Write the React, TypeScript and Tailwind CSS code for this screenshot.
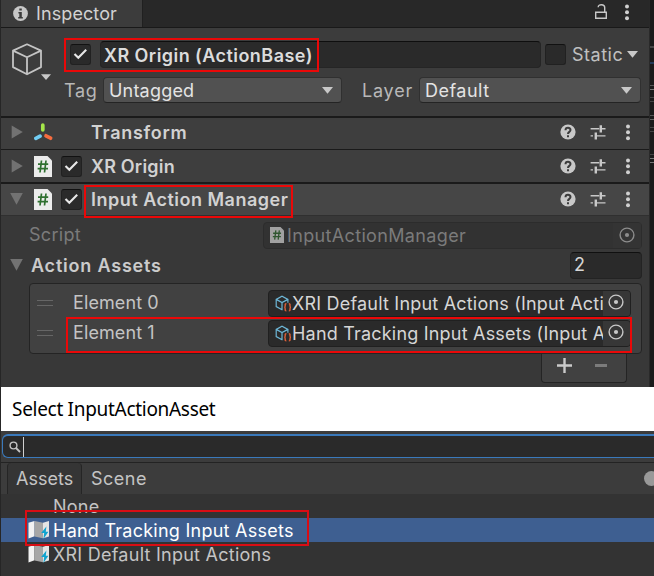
import type { ReactNode } from "react";

function Check({ on = true }: { on?: boolean }) {
  return (
    <span className="flex h-[21px] w-[21px] shrink-0 items-center justify-center rounded-[3px] border border-[#212121] border-t-[#111] bg-[#2a2a2a]">
      {on && (
        <svg width="15" height="13" viewBox="0 0 15 13" fill="none" stroke="#e8e8e8" strokeWidth="2.1">
          <path d="M1.5 6 5.3 9.8 13.2 1.8" />
        </svg>
      )}
    </span>
  );
}

function Caret() {
  return (
    <svg width="11" height="7" viewBox="0 0 11 7" className="shrink-0" fill="#c8c8c8">
      <path d="M0 0h11L5.5 6.8z" />
    </svg>
  );
}

function Foldout({ open = false }: { open?: boolean }) {
  return (
    <svg width="13" height="14" viewBox="0 0 13 14" className="shrink-0" fill="#727272">
      {open ? <path d="M.2 1h12.6L6.5 12.8z" /> : <path d="M1.7 .5 12.8 7 1.7 13.5z" />}
    </svg>
  );
}

function Kebab() {
  return (
    <svg width="4" height="17" viewBox="0 0 4 17" className="shrink-0" fill="#d0d0d0">
      <circle cx="2" cy="2.4" r="2" />
      <circle cx="2" cy="8.3" r="2" />
      <circle cx="2" cy="14.2" r="2" />
    </svg>
  );
}

function ScriptIcon({ small = false }: { small?: boolean }) {
  return (
    <svg width={small ? 14 : 18} height={small ? 16 : 21} viewBox="0 0 18 21" className="shrink-0" preserveAspectRatio="none">
      <path d="M0 0h13.5L18 4.5V21H0z" fill="#ececec" />
      <path d="M7.5 4.5 6 16.5M12 4.5 10.5 16.5M4 8.2h10.2M3.6 12.6H14" stroke="#2f7030" strokeWidth="1.7" fill="none" />
    </svg>
  );
}

function TransformIcon() {
  return (
    <svg width="20" height="18" viewBox="0 0 20 18" className="shrink-0" strokeLinecap="round" strokeWidth="3.7">
      <path d="M8.8 2v4.8" stroke="#a5e64a" />
      <path d="M6 13.2 1.9 15.3" stroke="#71cdf4" />
      <path d="m12 12.8 4.6 2.4" stroke="#f66c3f" />
    </svg>
  );
}

function Tools() {
  return (
    <div className="ml-auto flex items-center pr-[19px]">
      <svg width="16" height="16" viewBox="0 0 16 16">
        <circle cx="8" cy="8" r="7.6" fill="#c8c8c8" />
        <path d="M5.5 6.2C5.5 3 10.5 3 10.5 6.1 10.5 8 8 7.8 8 10" fill="none" stroke="#3c3c3c" strokeWidth="2" />
        <path d="M7 11.3h2v1.9H7z" fill="#3c3c3c" />
      </svg>
      <svg width="16" height="16" viewBox="0 0 16 16" className="ml-[14px]" fill="#c8c8c8">
        <path d="M.6 4h8.6v1.4H.6zM12 4h3.5v1.4H12zM9.6 1.2H12v7.2H9.6zM.6 11.2h2.4v1.4H.6zM7 11.2h8.5v1.4H7zM4.6 8.4H7v7.2H4.6z" />
      </svg>
      <span className="ml-[20px] flex">
        <Kebab />
      </span>
    </div>
  );
}

function AssetCube() {
  return (
    <svg width="17" height="17" viewBox="0 0 17 17" className="shrink-0" fill="none">
      <path d="M7.5 15 1.2 11.6V4.4L7 1.3l5.9 3.1v3.4M1.2 4.4 7 7.6l5.9-3.2M7 7.6V15" stroke="#6db6d6" strokeWidth="1.2" />
      <path d="M11.4 8.7c-1.4 0-1.2.8-1.2 2 0 1.3-.2 1.6-1 1.6.8 0 1 .3 1 1.6 0 1.2-.2 2 1.2 2M13.8 8.7c1.4 0 1.2.8 1.2 2 0 1.3.2 1.6 1 1.6-.8 0-1 .3-1 1.6 0 1.2.2 2-1.2 2" stroke="#e2613a" strokeWidth="1.4" />
    </svg>
  );
}

function Picker() {
  return (
    <svg width="16" height="16" viewBox="0 0 16 16">
      <circle cx="8" cy="8" r="6.9" fill="none" stroke="#c8c8c8" strokeWidth="1.4" />
      <circle cx="8" cy="8" r="2.1" fill="#c8c8c8" />
    </svg>
  );
}

function MapIcon() {
  return (
    <svg width="22" height="18" viewBox="0 0 22 18" className="shrink-0">
      <path d="M1.5 1.8 7.5 0v15.2l-6 2.4z" fill="#f2f2f2" />
      <path d="M7.5 0 16 1.8v15.4l-8.5-1.8z" fill="#a6a6a6" />
      <path d="M16 1.8 22 0v15.5l-6 1.7z" fill="#e4e4e4" />
      <path d="M19.4 5.6 14.2 12h3L16.4 18l5-7.2h-2.6z" fill="#0fa3cf" />
    </svg>
  );
}

function ComponentRow({ icon, title, check, open, className }: { icon: ReactNode; title: ReactNode; check?: boolean; open?: boolean; className: string }) {
  return (
    <div className={`flex items-center border-[#1a1a1a] pl-[9px] ${className}`}>
      <Foldout open={open} />
      <span className="ml-[11px] flex w-[27px]">{icon}</span>
      <span className="flex w-[30px]">{check && <Check />}</span>
      <span className="mt-[2px] font-semibold text-[#d2d2d2]">{title}</span>
      <Tools />
    </div>
  );
}

function ElementRow({ name, value, spacing }: { name: string; value: string; spacing: string }) {
  return (
    <div className="flex h-[30px] items-center pl-[7px] pr-[10px]">
      <span className="mb-px h-[6px] w-[16px] border-y border-[#666]" />
      <span className="ml-[20px] w-[195px] tracking-[0.1px] text-[#c4c4c4]">{name}</span>
      <div className="flex h-[27px] flex-1 items-center rounded-[4px] border border-[#202020] bg-[#2a2a2a] pl-[6px]">
        <AssetCube />
        <span className={`mt-[2px] w-[311px] whitespace-nowrap text-[#d6d6d6] ${spacing}`}>{value}</span>
        <span className="flex h-full flex-1 items-center justify-center rounded-r-[3px] bg-[#373737] pb-[2px] pr-px">
          <Picker />
        </span>
      </div>
    </div>
  );
}

function Dropdown({ label, className }: { label: string; className: string }) {
  return (
    <div className={`flex h-[26px] items-center justify-between rounded-[4px] border border-[#303030] border-b-[#242424] bg-[#515151] pl-[5px] pr-[8px] text-[#e4e4e4] ${className}`}>
      <span className="mt-[2px]">{label}</span>
      <Caret />
    </div>
  );
}

function Inspector() {
  return (
    <section className="flex h-[387px]">
      <div className="w-px bg-[#262626]" />
      <div className="w-[648px] bg-[#383838]">
        <header className="flex h-[28px] items-center border-b border-[#191919] bg-[#282828]">
          <div className="flex h-full w-[142px] items-center border-r border-[#202020] bg-[#3c3c3c] pl-[12px]">
            <svg width="15" height="15" viewBox="0 0 15 15" className="mb-px">
              <circle cx="7.5" cy="7.5" r="7.4" fill="#c8c8c8" />
              <path d="M6.3 2.5h2.5v2H6.3zM5.4 6h3.4v5h1v1.5H5.2V11h1.1V7.5h-.9z" fill="#3c3c3c" />
            </svg>
            <span className="ml-[8px] tracking-[0.1px] text-[#d2d2d2]">Inspector</span>
          </div>
          <svg width="14" height="17" viewBox="0 0 14 17" className="mb-[4px] ml-auto" fill="none" stroke="#c8c8c8" strokeWidth="1.4">
            <path d="M1.7 9.2h10.6v6H1.7zM10.7 9.2V4.5C10.7.8 4.2.8 4.2 4.2" />
          </svg>
          <span className="ml-[17px] mr-[20px] mt-[-3px] flex">
            <Kebab />
          </span>
        </header>
        <div className="flex h-[88px] bg-[#3c3c3c]">
          <div className="w-[63px] pl-[10px] pt-[15px]">
            <svg width="42" height="39" viewBox="0 0 42 39" fill="none" stroke="#c4c4c4" strokeWidth="1.8" strokeLinejoin="round">
              <path d="M16 1.3 30 7.6v16.5L16 31.3 2 24.1V7.6zM2 7.6l14 6.7 14-6.7M16 14.3v17" />
              <path d="M30 31.2h10L35 37z" fill="#c8c8c8" stroke="none" />
            </svg>
          </div>
          <div className="flex-1 pt-[13px]">
            <div className="flex h-[27px] items-center">
              <span className="ml-[6px] flex">
                <Check />
              </span>
              <div className="ml-[9px] flex h-[27px] w-[441px] items-center rounded-[4px] border border-[#252525] border-t-[#0e0e0e] bg-[#2a2a2a] pl-[3px] pt-[3px] font-semibold tracking-[0.45px] text-[#dcdcdc]">
                XR Origin (ActionBase)
              </div>
              <span className="ml-[4px] flex">
                <Check on={false} />
              </span>
              <span className="ml-[6px] mr-[4px] mt-px tracking-[0.5px] text-[#c0c0c0]">Static</span>
              <Caret />
            </div>
            <div className="mt-[9px] flex h-[26px] items-center text-[#b8b8b8]">
              <span className="mt-[2px] w-[39px] tracking-[0.7px]">Tag</span>
              <Dropdown label="Untagged" className="w-[239px] tracking-[0.2px]" />
              <span className="ml-[20px] mt-[2px] w-[57px] tracking-[0.8px]">Layer</span>
              <Dropdown label="Default" className="w-[222px] tracking-[0.5px]" />
            </div>
          </div>
        </div>
        <ComponentRow icon={<TransformIcon />} title={<span className="tracking-[0.7px]">Transform</span>} className="h-[33px] border-t-2 bg-[#3e3e3e] pb-[3px]" />
        <ComponentRow icon={<ScriptIcon />} title={<span className="tracking-[0.2px]">XR Origin</span>} check className="h-[33px] border-t bg-[#3e3e3e]" />
        <ComponentRow
          icon={<ScriptIcon />}
          title={<span className="tracking-[0.5px]">Input Action Manager</span>}
          check
          open
          className="h-[33px] border-t-2 bg-[#464646] pb-px"
        />
        <div className="border-t border-[#303030] pl-[28px] pr-[7px] pt-[5px]">
          <div className="flex h-[28px] items-center tracking-[0.5px] text-[#7b7b7b]">
            <span className="w-[234px] tracking-[0.3px]">Script</span>
            <div className="flex h-[27px] flex-1 items-center rounded-[4px] border border-[#2c2c2c] bg-[#323232] pl-[6px]">
              <span className="opacity-60">
                <ScriptIcon small />
              </span>
              <span className="ml-[3px] mt-[2px] tracking-[0.35px]">InputActionManager</span>
              <span className="ml-auto flex h-full w-[28px] items-center justify-center bg-[#363636] opacity-60">
                <Picker />
              </span>
            </div>
          </div>
          <div className="ml-[-19px] mt-[2px] flex h-[28px] items-center">
            <Foldout open />
            <span className="ml-[8px] mt-[2px] font-semibold tracking-[0.8px] text-[#cbcbcb]">Action Assets</span>
            <div className="ml-auto flex h-[27px] w-[72px] items-center rounded-[4px] border border-[#232323] border-t-[#101010] bg-[#2a2a2a] pl-[3px] text-[#d6d6d6]">2</div>
          </div>
          <div className="mt-[4px] h-[71px] rounded-[4px] border border-[#242424] bg-[#414141] pt-[4px]">
            <ElementRow name="Element 0" value="XRI Default Input Actions (Input Acti" spacing="tracking-[0.2px]" />
            <ElementRow name="Element 1" value="Hand Tracking Input Assets (Input A" spacing="tracking-[0.2px]" />
          </div>
          <div className="ml-auto mr-[15px] flex h-[29px] w-[86px] items-center justify-between rounded-b-[4px] border border-t-0 border-[#242424] bg-[#414141] px-[15px] pb-[6px]">
            <svg width="15" height="15" viewBox="0 0 15 15" fill="#cacaca">
              <path d="M6.3 0h2.4v6.3H15v2.4H8.7V15H6.3V8.7H0V6.3h6.3z" />
            </svg>
            <span className="mr-[4px] h-[3px] w-[12px] bg-[#7b7b7b]" />
          </div>
        </div>
      </div>
      <div className="flex-1 border-l border-[#292929] bg-[#1b1b1b]">
        <div className="mt-[46px] h-[2px] bg-[#444]" />
        <div className="mt-[14px] h-[2px] bg-[#243b58]" />
        <div className="mt-[21px] h-px bg-[#555]" />
        <div className="mt-[3px] h-px bg-[#777]" />
        <div className="mt-[7px] h-px bg-[#444]" />
        <div className="mt-[3px] h-px bg-[#444]" />
        <div className="mt-[13px] h-px bg-[#555]" />
        <div className="mt-[3px] h-px bg-[#666]" />
        <div className="mt-[7px] h-px bg-[#444]" />
        <div className="mt-[3px] h-px bg-[#444]" />
        <div className="mt-[22px] h-px bg-[#444]" />
        <div className="mt-[3px] h-px bg-[#777]" />
        <div className="mt-[3px] h-px bg-[#777]" />
      </div>
    </section>
  );
}

function AssetRow({ label, selected, icon }: { label: string; selected?: boolean; icon?: boolean }) {
  return (
    <div className={`flex h-[24px] items-center pl-[26px] tracking-[0.25px] ${selected ? "bg-[#3e5f91] text-white" : "text-[#c4c4c4]"}`}>
      <span className="w-[26px]">{icon && <MapIcon />}</span>
      <span className="mt-[2px]">{label}</span>
    </div>
  );
}

function Selector() {
  return (
    <section className="flex h-[189px] bg-[#262626]">
      <div className="ml-px flex-1 bg-[#333]">
        <h1 className="flex h-[44px] items-center bg-white pb-px pl-[11px] font-['Noto_Sans',sans-serif] text-[19px] tracking-[-0.3px] text-black">
          Select InputActionAsset
        </h1>
        <div className="h-[32px] border-b border-[#232323] bg-[#3c3c3c] pl-px pt-[3px]">
          <div className="flex h-[24px] items-center rounded-l-[6px] border border-r-0 border-t-2 border-[#3a79bb] bg-[#2a2a2a] pl-[6px]">
            <svg width="12" height="12" viewBox="0 0 12 12" fill="none" stroke="#c4c4c4" strokeWidth="1.4">
              <circle cx="4.5" cy="4.5" r="3.4" />
              <path d="m7 7 4 4" strokeWidth="1.8" />
            </svg>
            <span className="ml-[2px] h-[20px] w-px bg-[#d0d0d0]" />
          </div>
        </div>
        <div className="flex h-[31px] items-center overflow-hidden bg-[#3c3c3c] pl-[6px] text-[#c4c4c4]">
          <span className="flex h-full w-[75px] items-center rounded-t-[4px] border-x border-[#252525] bg-[#353535] pl-[8px] pt-px tracking-[0]">Assets</span>
          <span className="ml-[9px] mt-px tracking-[0.5px]">Scene</span>
          <span className="-mr-[5px] ml-auto h-[15px] w-[15px] rounded-full bg-[#999]" />
        </div>
        <AssetRow label="None" />
        <AssetRow label="Hand Tracking Input Assets" selected icon />
        <AssetRow label="XRI Default Input Actions" icon />
      </div>
    </section>
  );
}

export default function App() {
  return (
    <main className="relative h-[576px] w-[654px] overflow-hidden font-[Inter,sans-serif] text-[18px] leading-[22px]">
      <Inspector />
      <Selector />
      <div className="absolute left-[64px] top-[38px] h-[34px] w-[255px] border-2 border-[#ea0808]" />
      <div className="absolute left-[84px] top-[185px] h-[33px] w-[209px] border-2 border-[#ea0808]" />
      <div className="absolute left-[66px] top-[317px] h-[36px] w-[566px] border-2 border-[#ea0808]" />
      <div className="absolute left-[25px] top-[510px] h-[36px] w-[284px] border-2 border-[#d90d14]" />
    </main>
  );
}
